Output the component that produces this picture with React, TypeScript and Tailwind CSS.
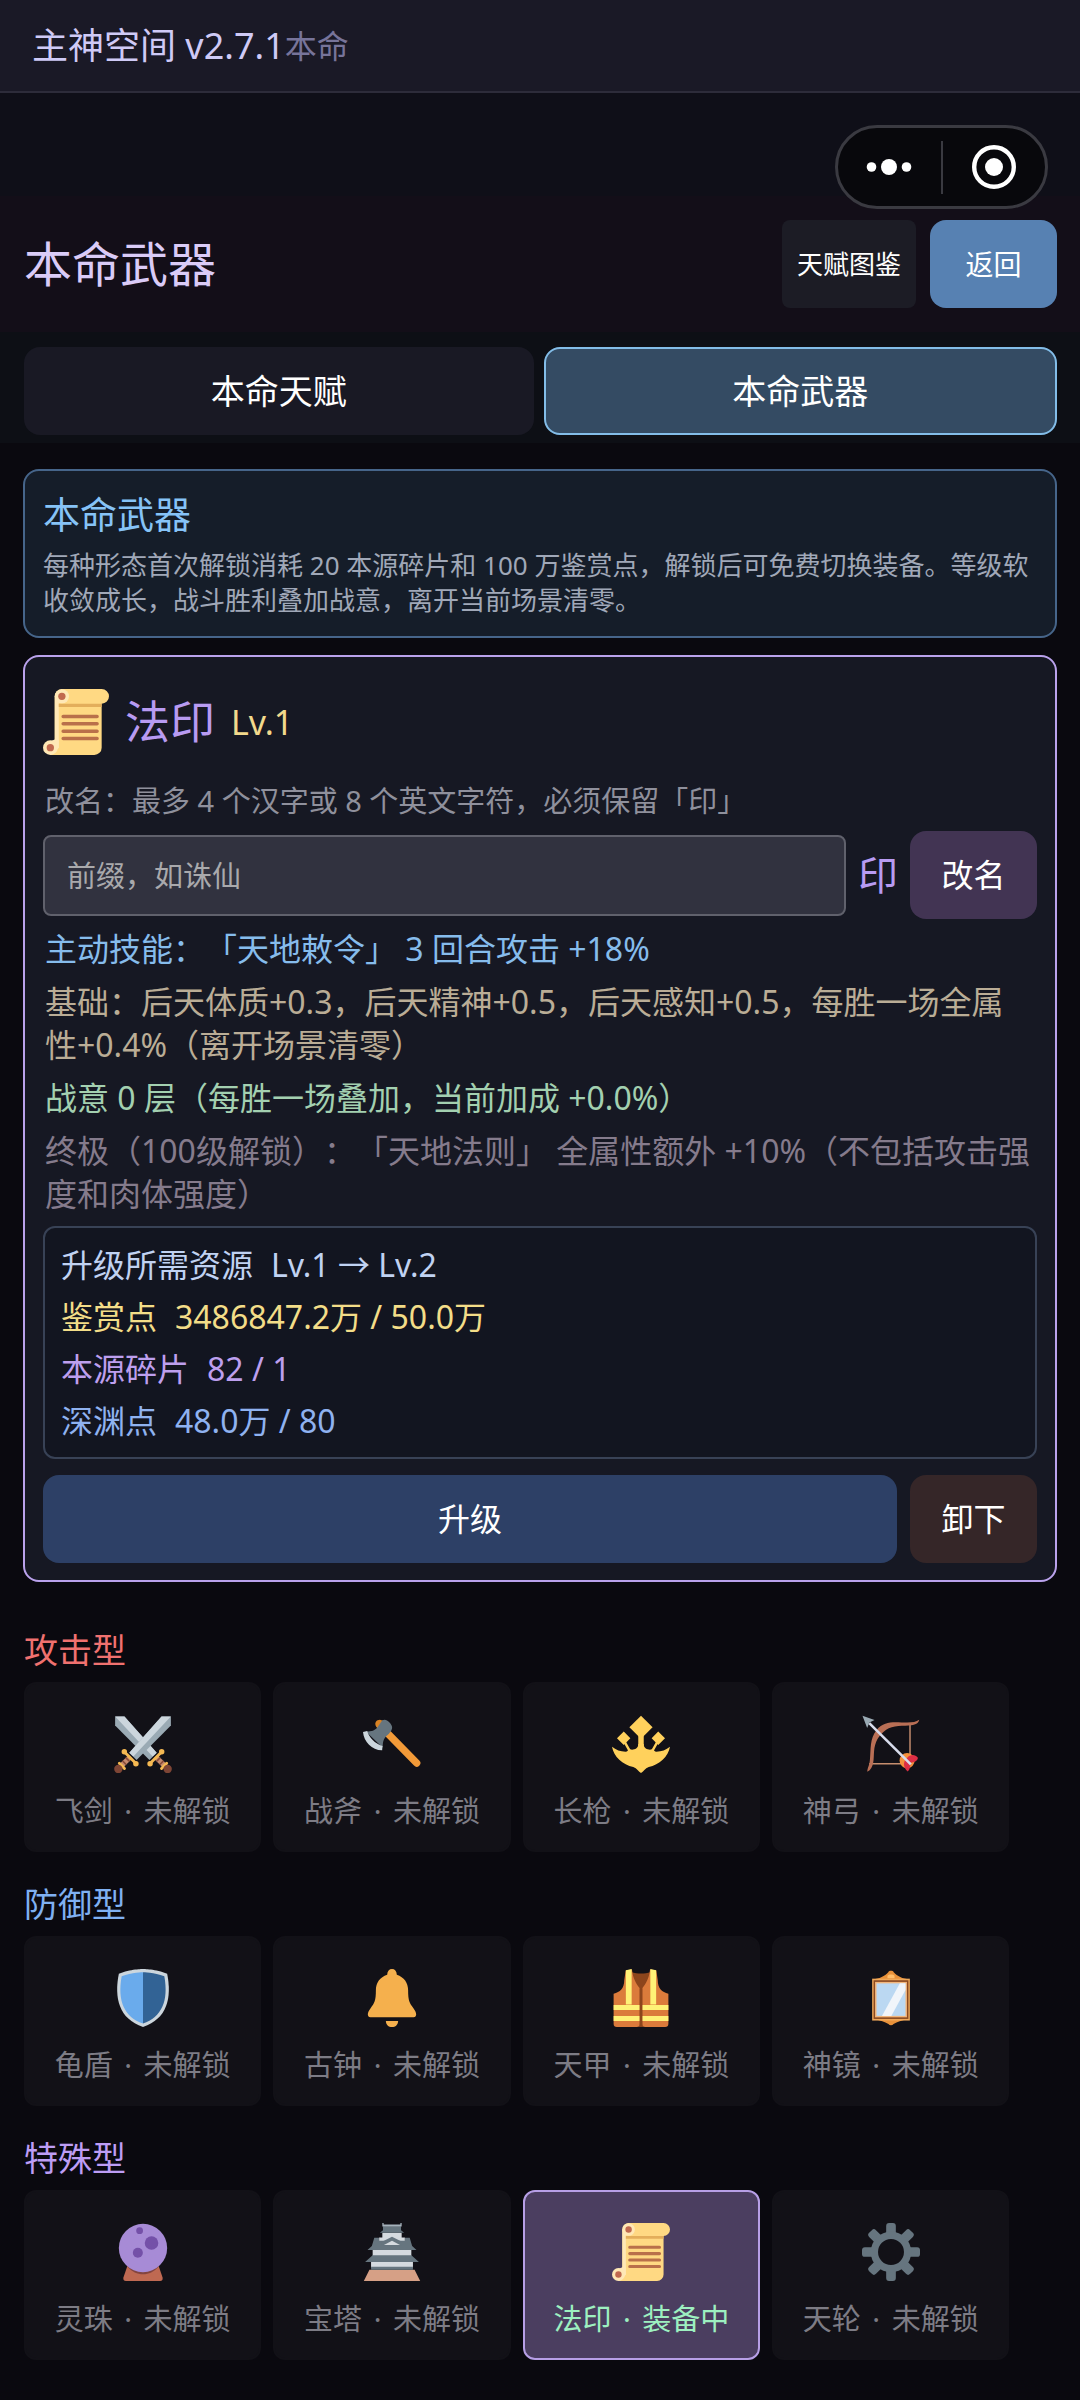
import React, { useState } from "react";

const Scroll = () => (
  <>
    <path fill="#FFD983" d="M10 0h22a4 4 0 0 1 0 8v24a4 4 0 0 1-4 4H4V32l2.4-2V4A4 4 0 0 1 10 0z" />
    <path fill="#FFE8B6" d="M6.400 4h2.200v28H6.400z" />
    <circle cx="10.300" cy="4" r="3.900" fill="#FFE8B6" />
    <circle cx="4" cy="32" r="4" fill="#FFE8B6" />
    <path fill="#FFE8B6" d="M4 28.500l2.400-1h2.200V32L7 34z" />
    <path fill="#E3AE5B" d="M8.600 8H32v1.800H8.600z" />
    <circle cx="10.300" cy="4" r="2" fill="#C1694F" />
    <circle cx="4" cy="32" r="2" fill="#C1694F" />
    <path stroke="#B9704A" strokeWidth="1.900" strokeLinecap="round" d="M11 15h18.500M11 19h18.500M11 23h18.500M11 27h18.500" />
  </>
);

const Sword = () => (
  <>
    <path fill="#9AAAB4" d="M29.500 1h5.800v5.500L14 28l-4.500-4.500z" />
    <path fill="#CCD6DD" d="M29.500 1h5.800L12 25.800l-2.500-2.300z" />
    <path stroke="#C58A6E" strokeWidth="3.200" d="M10.300 25.800L4 32" />
    <path stroke="#8A4B38" strokeWidth="1" d="M7.300 26.500l2.200 2.200M5.300 28.500l2.200 2.200" />
    <path stroke="#F4B852" strokeWidth="1.800" strokeLinecap="round" d="M6.500 23l7 7M3.300 30l3.200 3.200" />
    <circle cx="6.400" cy="22.800" r="1.700" fill="#F4B852" />
    <circle cx="13.600" cy="30.300" r="1.700" fill="#F4B852" />
    <circle cx="2.700" cy="33.500" r="2.600" fill="#7E4535" />
  </>
);

const Swords = () => (
  <>
    <g transform="translate(36 0) scale(-1 1)">
      <Sword />
    </g>
    <Sword />
  </>
);

const Axe = () => (
  <>
    <path stroke="#F29A38" strokeWidth="4.600" strokeLinecap="round" d="M10.500 6.500L33.300 29.800" />
    <path fill="#D98324" d="M7.800 6.300c-.6-1.400.5-3.300 2.700-3.300l2 .5-3.400 4z" />
    <path fill="#66757F" d="M12 3.300c1.500-.8 3-.3 4.300 1.200 1.800 1.900 2.300 3.200 1.200 5.200l-1.400 2c-3 2.300-4 4.500-3.800 8.600L1.800 10.200c4 .4 6-.7 7.700-3.300z" />
    <path fill="#CCD6DD" d="M0 10.500l2.600-.5c1.200 4 4.800 8 9.500 9.200l-.2 2.700C5.700 22 .5 16.500 0 10.500z" />
  </>
);

const Trident = () => (
  <>
    <path fill="#FFD15C" d="M18 .4l7.200 7.200L18 14.700l-7.200-7.100z" />
    <path stroke="#FFD15C" strokeWidth="3.400" d="M18 12v12" />
    <path fill="#FFD15C" d="M7.300 10.300l4.100 4.100-4.100 4.200-4.200-4.200zM28.700 10.300l4.200 4.100-4.200 4.200-4.100-4.200z" />
    <path stroke="#FFD15C" strokeWidth="1.500" d="M8 17l2.700 4.800M28 17l-2.700 4.800" />
    <path
      fill="#FFD15C"
      d="M0 19.700c2.400 2 5.300 3 8.400 3.100 1.200 0 1.700-1 2-1.800 1.300.8 3.400.6 4.600-.2 1-.7 1.300-1.500 1.300-2.800h3.400c0 1.300.3 2.100 1.300 2.800 1.200.8 3.300 1 4.600.2.300.8.800 1.800 2 1.800 3.100-.1 6-1.100 8.400-3.100-1 6-6.700 11.400-13.200 12.500-2.300.8-3.300 3-4.800 3.800-1.500-.8-2.500-3-4.800-3.800C6.700 31.100 1 25.700 0 19.700z"
    />
  </>
);

const Bow = () => (
  <>
    <path stroke="#C68E6E" strokeWidth=".9" d="M29.800 5v22M4.500 30.300H26" />
    <circle cx="28" cy="28.300" r="4.700" fill="#F4903C" />
    <path fill="#B96F55" d="M35.500 3c-.3 2-1.900 3-4.900 3.400-4.500.6-11.600-.1-15.600 2.800-5 3.600-7 7.800-7.500 13.300-.4 4.500.3 10.400-4.200 12.800 0-2.300 1.200-3.400 1.600-7.300C5.600 21 4.700 14.600 9 9.400c4.300-5.300 9.300-5 15.500-4.800 5.300.2 8.500.2 11-1.600z" />
    <path fill="#DD2E44" d="M28.500 26c2-1.500 4.500-1.800 6.200.6-.1 1.800-2 2.900-4.700 3.100.1 2.700-.6 4.800-1.600 5.300-2.300-1.600-3-4.800-1.600-7z" />
    <path stroke="#D8DCEC" strokeWidth="1.600" d="M4.500 5L30.300 30.600" />
    <path fill="#9AAAB4" d="M.3.400l7.500 2.700-3.200 1.600L3.200 8z" />
  </>
);

const Shield = () => (
  <>
    <path fill="#CCD6DD" d="M33 3c-7-3-15-3-15-3S10 0 3 3C0 18 3 31 18 36c15-5 18-18 15-33z" />
    <path fill="#6AABEC" d="M18 33.884C6.412 29.729 1.961 19.831 4.760 4.444 11.063 2.029 17.928 2 18 2v31.884z" />
    <path fill="#326395" d="M31.240 4.444C24.937 2.029 18.072 2 18 2v31.884c11.588-4.155 16.039-14.053 13.240-29.440z" />
  </>
);

const Bell = () => (
  <path
    fill="#F5B04D"
    d="M18 0c1.700 0 2.900 1.200 3 3.500 4.500 1.500 7 5 7 9.500 0 7 .9 8 3.300 11.300C32.600 26.200 33 27 33 28.300c0 1-.6 1.700-1.600 1.700H4.600C3.600 30 3 29.300 3 28.300c0-1.300.4-2.100 1.700-4C7.100 21 8 20 8 13c0-4.500 2.500-8 7-9.500C15.100 1.200 16.300 0 18 0zM14.200 32.200h7.600c0 2.300-1.700 3.800-3.800 3.800s-3.800-1.500-3.800-3.800z"
  />
);

const Vest = () => (
  <>
    <path fill="#8C451C" d="M12 1.800c4 1.400 8 1.400 12 0V20L19.500 36h-3L12 20z" />
    <path fill="#DB7B3B" d="M8.500 1L12.400.3C13 6 15 9 17.200 12v22c0 1.300-.6 2-1.700 2H3c-1.300 0-2-.7-2-2V15.300C5 14.500 7.600 12 7.600 7z" />
    <path fill="#DB7B3B" d="M27.500 1L23.600.3C23 6 21 9 18.800 12v22c0 1.300.6 2 1.700 2H33c1.300 0 2-.7 2-2V15.300c-4-.8-6.600-3.300-6.600-8.300z" />
    <path fill="#FFF176" d="M8.600.8l3.600-.8v22H8.600zM27.400.8L23.800 0v22h3.600zM1 22.300h16.200v3.100H1zM18.800 22.300H35v3.100H18.800zM1 29.200h16.200v3.100H1zM18.800 29.200H35v3.100H18.800z" />
    <path fill="#8C451C" d="M17.200 12h1.600v24h-1.600z" />
  </>
);

const Mirror = () => (
  <>
    <path fill="#E8913A" d="M6.500 6.500C11 6 14 4.500 16.300 2c.5-1.200 2.900-1.200 3.400 0C22 4.500 25 6 29.500 6.500zM8 31h20c-3.500 1.200-6 1.600-8.400 3.200-.8 1-2.400 1-3.200 0C14 32.600 11.500 32.200 8 31z" />
    <path fill="#FFBE6B" d="M15.800 4.200c.8-1 3.600-1 4.400 0v1.600h-4.400z" />
    <rect x="6.300" y="6" width="23.400" height="26" fill="#F0A95A" />
    <rect x="7.200" y="7" width="21.600" height="24" fill="#8A4A22" />
    <rect x="8.100" y="8" width="19.800" height="22" fill="#F2B67C" />
    <rect x="9" y="8.900" width="18" height="20.200" fill="#BBD8F2" />
    <path fill="#F1F5FA" d="M23.500 8.900H27v4.200l-8.800 16h-5.800z" />
  </>
);

const Orb = () => (
  <>
    <path fill="#BF6952" d="M8.500 26h19l2.600 7.600c.4 1.400-.2 2.400-1.500 2.400H7.400c-1.300 0-1.900-1-1.500-2.400z" />
    <path fill="#834540" d="M8.200 27l.8-2h18l.8 2C22 33.500 14 33.500 8.200 27z" />
    <circle cx="18" cy="15.500" r="15" fill="#A78BD6" />
    <circle cx="23.300" cy="12.400" r="4.200" fill="#7450A8" />
    <circle cx="14.800" cy="18.500" r="3.100" fill="#7450A8" />
    <circle cx="15.900" cy="4.800" r="2.100" fill="#7450A8" />
  </>
);

const Castle = () => (
  <>
    <path fill="#D6A086" d="M4 29h28l3.500 7H.5z" />
    <path fill="#D5DADF" d="M12 6h12v5H12zM10 9h16v3H10zM6 16h24v5H6zM5 23h26v5H5z" />
    <path fill="#66757F" d="M12.400 2h11.200v2.500L25.500 6h-15l1.900-1.500zM7 9.200h3V11h16V9.200h3l1.500 5 2.700 2.600H2.800l2.700-2.600zM6 20h24l4.700 4.200H1.300zM5 27.200h26V29H5z" />
    <path fill="#A5B2BC" d="M12 0h.8v1h10.400V0h.8v2.200H12z" />
    <path fill="#66757F" d="M18 8.600l6.500 3.200v2h-13v-2z" />
    <path fill="#D5DADF" d="M18 11l5 2.700H13z" />
  </>
);

const Gear = () => (
  <>
    {[0, 45, 90, 135, 180, 225, 270, 315].map((angle) => (
      <rect key={angle} x="15" y="0" width="6" height="9" rx="1.800" fill="#66757F" transform={`rotate(${angle} 18 18)`} />
    ))}
    <circle cx="18" cy="18" r="10.300" fill="none" stroke="#66757F" strokeWidth="4.500" />
  </>
);

function Emoji({ art: Art, className }: { art: React.ComponentType; className: string }) {
  return (
    <svg viewBox="0 0 36 36" fill="none" aria-hidden="true" className={className}>
      <Art />
    </svg>
  );
}

const groups = [
  {
    title: "攻击型",
    color: "text-[#f0716f]",
    items: [
      { name: "飞剑", art: Swords },
      { name: "战斧", art: Axe },
      { name: "长枪", art: Trident },
      { name: "神弓", art: Bow },
    ],
  },
  {
    title: "防御型",
    color: "text-[#7fb0f2]",
    items: [
      { name: "龟盾", art: Shield },
      { name: "古钟", art: Bell },
      { name: "天甲", art: Vest },
      { name: "神镜", art: Mirror },
    ],
  },
  {
    title: "特殊型",
    color: "text-[#bd9df5]",
    items: [
      { name: "灵珠", art: Orb },
      { name: "宝塔", art: Castle },
      { name: "法印", art: Scroll, equipped: true },
      { name: "天轮", art: Gear },
    ],
  },
];

const costs = [
  { label: "鉴赏点", value: "3486847.2万 / 50.0万", color: "text-[#f3dd88]" },
  { label: "本源碎片", value: "82 / 1", color: "text-[#bd9fee]" },
  { label: "深渊点", value: "48.0万 / 80", color: "text-[#8fb2f0]" },
];

export default function App() {
  const [prefix, setPrefix] = useState("");

  return (
    <div className="relative min-h-screen bg-[#0a090f] pb-9 font-['Noto_Sans','Noto_Sans_CJK_SC',sans-serif] font-normal text-white [text-spacing-trim:space-all]">
      <header className="flex h-[93px] items-center border-b-2 border-[#2d2c3a] bg-[#1a1926] px-8">
        <span className="text-[36px] leading-[44px] text-[#cfcaf6]">主神空间 v2.7.1</span>
        <span className="text-[32px] leading-[44px] text-[#77749a]">本命</span>
      </header>

      <div className="absolute right-8 top-[125px] flex h-[84px] w-[213px] items-center rounded-full border-[3px] border-[#3a3a41] bg-[#08080c]">
        <button type="button" aria-label="更多" className="flex flex-1 justify-center">
          <svg viewBox="0 0 46 18" className="h-[18px] w-[46px]" fill="#fff" aria-hidden="true">
            <circle cx="5.500" cy="9" r="4.800" />
            <circle cx="23" cy="9" r="8" />
            <circle cx="40.500" cy="9" r="4.800" />
          </svg>
        </button>
        <span className="h-[53px] w-[2px] bg-[#3a3a41]" />
        <button type="button" aria-label="关闭" className="flex flex-1 justify-center">
          <svg viewBox="0 0 44 44" className="size-[44px]" aria-hidden="true">
            <circle cx="22" cy="22" r="19.800" fill="none" stroke="#fff" strokeWidth="4.400" />
            <circle cx="22" cy="22" r="9" fill="#fff" />
          </svg>
        </button>
      </div>

      <div className="bg-[#0f0f18] pt-[103px]">
        <div className="flex items-center bg-[#130e18] py-6 pl-6 pr-[23px]">
          <h1 className="flex-1 text-[48px] leading-[60px] text-[#dacbf7]">本命武器</h1>
          <button type="button" className="h-[88px] w-[134px] rounded-lg bg-[#1c1c25] text-[26px]">
            天赋图鉴
          </button>
          <button type="button" className="ml-[14px] h-[88px] w-[127px] rounded-2xl bg-[#5781b2] text-[28px]">
            返回
          </button>
        </div>
      </div>

      <nav className="flex gap-[10px] bg-[#0d0f15] pb-2 pl-6 pr-[23px] pt-[15px]">
        <button type="button" className="h-[88px] flex-1 rounded-2xl bg-[#191924] text-[34px]">
          本命天赋
        </button>
        <button type="button" aria-current="page" className="h-[88px] flex-1 rounded-2xl border-2 border-[#83bde8] bg-[#344b63] text-[34px]">
          本命武器
        </button>
      </nav>

      <main className="px-[23px] pt-[26px]">
        <section className="rounded-2xl border-2 border-[#46658a] bg-[#151d29] px-[18px] pb-[18px] pt-[22px]">
          <h2 className="text-[37px] leading-[44px] text-[#86c3f7]">本命武器</h2>
          <p className="mt-[11px] text-[26px] leading-[35px] text-[#a0a8b8]">
            每种形态首次解锁消耗 20 本源碎片和 100 万鉴赏点，解锁后可免费切换装备。等级软收敛成长，战斗胜利叠加战意，离开当前场景清零。
          </p>
        </section>

        <section className="mt-[17px] rounded-2xl border-2 border-[#baa2ec] bg-[#161823] px-[18px] pb-[17px] pt-8">
          <div className="flex items-center">
            <Emoji art={Scroll} className="size-[66px]" />
            <h2 className="ml-4 text-[45px] leading-[60px] text-[#b89bf2]">法印</h2>
            <span className="ml-4 text-[34px] leading-[44px] text-[#f2d98c]">Lv.1</span>
          </div>

          <label htmlFor="prefix" className="mt-[26px] block px-0.5 text-[29px] leading-10 text-[#8f909c]">
            改名：最多 4 个汉字或 8 个英文字符，必须保留「印」
          </label>
          <div className="mt-[10px] flex items-center gap-3">
            <input
              id="prefix"
              value={prefix}
              onChange={(e) => setPrefix(e.target.value)}
              placeholder="前缀，如诛仙"
              className="h-[81px] min-w-0 flex-1 rounded-lg border-2 border-[#60616c] bg-[#31323f] px-[22px] text-[29px] text-[#dddddd] placeholder:text-[#a9a9ac]"
            />
            <span className="text-[40px] leading-[60px] text-[#b89bf2]">印</span>
            <button type="button" className="h-[88px] w-[127px] rounded-2xl bg-[#423453] text-[32px]">
              改名
            </button>
          </div>

          <div className="mt-2 space-y-[10px] px-0.5 text-[32px] leading-[43px]">
            <p className="text-[#86bcec]">主动技能：「天地敕令」 3 回合攻击 +18%</p>
            <p className="text-[#baad96]">基础：后天体质+0.3，后天精神+0.5，后天感知+0.5，每胜一场全属性+0.4%（离开场景清零）</p>
            <p className="text-[#a3d0b0]">战意 0 层（每胜一场叠加，当前加成 +0.0%）</p>
            <p className="text-[#857b8c]">终极（100级解锁）：「天地法则」 全属性额外 +10%（不包括攻击强度和肉体强度）</p>
          </div>

          <div className="mt-[11px] space-y-[9px] rounded-xl border-2 border-[#384256] bg-[#121520] px-4 py-[15px] text-[32px] leading-[43px]">
            <div className="flex gap-[18px] text-[#c0d2f2]">
              <span>升级所需资源</span>
              <span>Lv.1 → Lv.2</span>
            </div>
            {costs.map((cost) => (
              <div key={cost.label} className={`flex gap-[18px] ${cost.color}`}>
                <span>{cost.label}</span>
                <span>{cost.value}</span>
              </div>
            ))}
          </div>

          <div className="mt-4 flex gap-[13px]">
            <button type="button" className="h-[88px] flex-1 rounded-2xl bg-[#2d4066] text-[32px]">
              升级
            </button>
            <button type="button" className="h-[88px] w-[127px] rounded-2xl bg-[#352628] text-[32px]">
              卸下
            </button>
          </div>
        </section>

        <div className="mt-[46px] space-y-[30px] px-px">
          {groups.map((group) => (
            <section key={group.title}>
              <h3 className={`text-[34px] leading-[44px] ${group.color}`}>{group.title}</h3>
              <div className="mt-[10px] flex gap-3">
                {group.items.map((item) => (
                  <button
                    key={item.name}
                    type="button"
                    className={`flex h-[170px] w-[23%] flex-col items-center justify-center gap-[18px] rounded-xl border-2 pt-3 text-[29px] leading-10 ${
                      item.equipped
                        ? "border-[#b79fe6] bg-[#4b3e60] text-[#9df0c0]"
                        : "border-[#121117] bg-[#121117] text-[#7d7c85]"
                    }`}
                  >
                    <Emoji art={item.art} className="size-[58px]" />
                    <span className="whitespace-nowrap">
                      {item.name} <span className="mx-1">·</span> {item.equipped ? "装备中" : "未解锁"}
                    </span>
                  </button>
                ))}
              </div>
            </section>
          ))}
        </div>
      </main>
    </div>
  );
}
